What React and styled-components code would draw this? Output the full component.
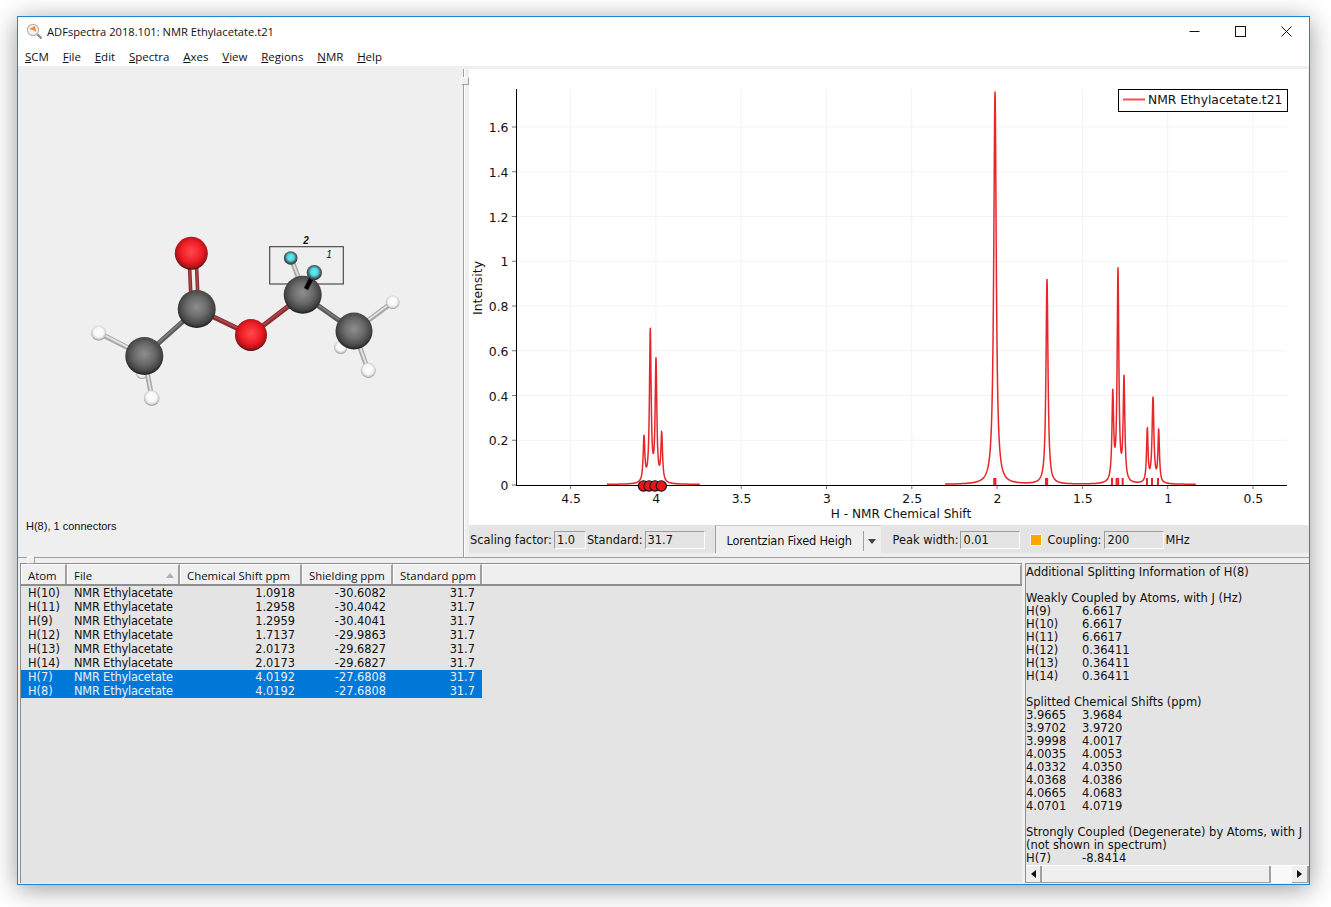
import React from 'react';
import styled, { createGlobalStyle } from 'styled-components';

const GlobalStyle = createGlobalStyle`
  html, body { margin: 0; padding: 0; background: #fff; }
  body { font-family: "DejaVu Sans", sans-serif; font-size: 11px; color: #111; }
`;

const Desktop = styled.div`
  box-sizing: border-box;
  width: 1331px;
  height: 907px;
  padding: 16px 0 0 17px;
  overflow: hidden;
`;

const Window = styled.div`
  box-sizing: border-box;
  width: 1293px;
  height: 869px;
  border: 1px solid #1a86d8;
  background: #efefef;
  box-shadow: 0 4px 24px rgba(0, 0, 0, 0.4);
  display: flex;
  flex-direction: column;
`;

const TitleBar = styled.div`
  height: 29px;
  background: #fff;
  display: flex;
  align-items: center;
  padding-left: 8px;
  font-family: "Open Sans", sans-serif;
  font-size: 11.15px;
  color: #111;
`;
const TitleText = styled.span`
  margin-left: 4px;
  flex: 1;
`;
const WinButton = styled.div`
  width: 46px;
  height: 29px;
  display: flex;
  align-items: center;
  justify-content: center;
`;

const MenuBar = styled.div`
  height: 20px;
  background: #fff;
  display: flex;
  align-items: center;
  gap: 13.8px;
  padding-left: 7px;
  font-family: "Open Sans", sans-serif;
  font-size: 11.5px;
  color: #111;
`;
const MenuItem = styled.span`
  white-space: nowrap;
  u { text-underline-offset: 1px; }
`;

const TopPane = styled.div`
  height: 491px;
  display: flex;
`;
const LeftPane = styled.div`
  width: 444px;
  display: flex;
  flex-direction: column;
`;
const Status = styled.div`
  font-family: "Liberation Sans", sans-serif;
  font-size: 11px;
  line-height: 20px;
  padding-left: 8px;
`;
const VSplit = styled.div`
  position: relative;
  width: 7px;
  margin-top: 3px;
  &::before {
    content: "";
    position: absolute;
    left: 1px;
    top: 0;
    bottom: 0;
    width: 1px;
    background: #a0a0a0;
    box-shadow: 1px 0 0 #fff;
  }
`;
const SplitHandle = styled.div`
  position: absolute;
  box-sizing: border-box;
  width: 8px;
  height: 8px;
  background: #efefef;
  border: 1px solid #a0a0a0;
  border-top-color: #fff;
  border-left-color: #fff;
  left: ${p => p.$left}px;
  top: ${p => p.$top}px;
`;
const RightPane = styled.div`
  flex: 1;
  display: flex;
  flex-direction: column;
  padding-top: 3px;
`;
const PlotSvg = styled.svg`
  display: block;
  width: 839px;
  height: 456px;
  background: #fff;
`;
const Controls = styled.div`
  height: 28px;
  background: #e4e4e4;
  display: flex;
  align-items: center;
  padding: 2px 0 0 1px;
  box-sizing: border-box;
  font-size: 11.4px;
  white-space: nowrap;
`;
const Field = styled.div`
  box-sizing: border-box;
  width: ${p => p.$w}px;
  height: 18px;
  margin: -1px ${p => p.$mr || 2}px 0 ${p => p.$ml || 2}px;
  padding-left: 2px;
  line-height: 16px;
  border: 1px solid #fff;
  border-top-color: #9c9c9c;
  border-left-color: #9c9c9c;
`;
const Combo = styled.div`
  box-sizing: border-box;
  flex: none;
  width: 166px;
  height: 28px;
  margin: -2px 12px 0 8px;
  padding-top: 2px;
  background: #efefef;
  border-left: 1px solid #a0a0a0;
  border-top: 1px solid #c8c8c8;
  display: flex;
  align-items: center;
`;
const ComboText = styled.span`
  flex: none;
  width: 136px;
  margin-left: 11px;
  letter-spacing: -0.2px;
`;
const ComboArrow = styled.span`
  flex: none;
  height: 20px;
  width: 17px;
  border-left: 1px solid #a0a0a0;
  position: relative;
  &::after {
    content: "";
    position: absolute;
    left: 4px;
    top: 8px;
    border: 4px solid transparent;
    border-top: 5px solid #444;
    border-bottom: 0;
  }
`;
const OrangeCheck = styled.span`
  box-sizing: border-box;
  width: 10px;
  height: 10px;
  margin: -1px 6px 0 9px;
  background: #ffa500;
  box-shadow: 0 0 0 1px #f6f6f6;
`;

const HSplit = styled.div`
  position: relative;
  height: 6px;
  border-top: 1px solid #a0a0a0;
  box-sizing: border-box;
`;

const BottomPane = styled.div`
  height: 320px;
  display: flex;
  gap: 3px;
  padding-left: 2px;
`;
const TablePanel = styled.div`
  box-sizing: border-box;
  width: 1002px;
  background: #e4e4e4;
  border-left: 1px solid #8e8e8e;
  border-top: 1px solid #8e8e8e;
`;
const HeaderRow = styled.div`
  display: flex;
  height: 22px;
  background: #efefef;
  border-bottom: 2px solid #8e8e8e;
  box-sizing: border-box;
`;
const HeaderCell = styled.div`
  box-sizing: border-box;
  position: relative;
  width: ${p => p.$w}px;
  flex: ${p => (p.$fill ? 1 : 'none')};
  padding-left: 6px;
  line-height: 21px;
  font-family: "Open Sans", sans-serif;
  font-size: 11.4px;
  border-right: 2px solid #a0a0a0;
  border-left: 1px solid #fff;
  border-top: 1px solid #fff;
  white-space: nowrap;
`;
const SortArrow = styled.span`
  position: absolute;
  right: 4px;
  top: 8px;
  border: 4px solid transparent;
  border-bottom: 5px solid #b0b0b0;
  border-top: 0;
`;
const Row = styled.div`
  width: 461px;
  height: 14px;
  display: grid;
  grid-template-columns: 46px 113px 122px 91px 89px;
  line-height: 14px;
  font-size: 11.4px;
  background: ${p => (p.$selected ? '#0078d7' : 'transparent')};
  color: ${p => (p.$selected ? '#e8f0f8' : '#111')};
`;
const Cell = styled.div`
  padding: 0 7px;
  text-align: ${p => (p.$right ? 'right' : 'left')};
  white-space: nowrap;
`;
const FileCell = styled(Cell)`
  letter-spacing: -0.19px;
`;

const DetailPanel = styled.div`
  box-sizing: border-box;
  flex: 1;
  min-width: 0;
  background: #e4e4e4;
  border-left: 1px solid #8e8e8e;
  border-top: 1px solid #8e8e8e;
  display: flex;
  flex-direction: column;
`;
const DetailText = styled.div`
  flex: 1;
  padding-top: 2px;
  font-size: 11.5px;
  line-height: 13px;
  white-space: nowrap;
`;
const DetailLine = styled.div`
  height: 13px;
  display: flex;
`;
const DetailKey = styled.span`
  width: 56px;
`;
const ScrollBar = styled.div`
  height: 18px;
  display: flex;
  border-top: 1px solid #fff;
  box-sizing: border-box;
  background: repeating-conic-gradient(#f4f4f4 0 25%, #fff 0 50%) 0 0 / 2px 2px;
`;
const ScrollButton = styled.div`
  box-sizing: border-box;
  width: ${p => p.$w}px;
  background: #efefef;
  border-right: 2px solid #a0a0a0;
  border-bottom: 1px solid #a0a0a0;
  display: flex;
  align-items: center;
  justify-content: center;
  &::after {
    content: "";
    border: 4px solid transparent;
    ${p => (p.$dir === 'left' ? 'border-right: 5px solid #111; border-left: 0;' : 'border-left: 5px solid #111; border-right: 0;')}
  }
`;
const ScrollThumb = styled.div`
  box-sizing: border-box;
  width: 229px;
  background: #efefef;
  border-right: 2px solid #a0a0a0;
  border-bottom: 1px solid #a0a0a0;
`;
const ScrollTrack = styled.div`
  flex: 1;
`;

const MENU = ['SCM', 'File', 'Edit', 'Spectra', 'Axes', 'View', 'Regions', 'NMR', 'Help'];

const ROWS = [
  ['H(10)', '1.0918', '-30.6082'],
  ['H(11)', '1.2958', '-30.4042'],
  ['H(9)', '1.2959', '-30.4041'],
  ['H(12)', '1.7137', '-29.9863'],
  ['H(13)', '2.0173', '-29.6827'],
  ['H(14)', '2.0173', '-29.6827'],
  ['H(7)', '4.0192', '-27.6808', true],
  ['H(8)', '4.0192', '-27.6808', true],
];

const DETAIL = [
  ['Additional Splitting Information of H(8)'],
  [''],
  ['Weakly Coupled by Atoms, with J (Hz)'],
  ['H(9)', '6.6617'],
  ['H(10)', '6.6617'],
  ['H(11)', '6.6617'],
  ['H(12)', '0.36411'],
  ['H(13)', '0.36411'],
  ['H(14)', '0.36411'],
  [''],
  ['Splitted Chemical Shifts (ppm)'],
  ['3.9665', '3.9684'],
  ['3.9702', '3.9720'],
  ['3.9998', '4.0017'],
  ['4.0035', '4.0053'],
  ['4.0332', '4.0350'],
  ['4.0368', '4.0386'],
  ['4.0665', '4.0683'],
  ['4.0701', '4.0719'],
  [''],
  ['Strongly Coupled (Degenerate) by Atoms, with J'],
  ['(not shown in spectrum)'],
  ['H(7)', '-8.8414'],
];

// page pixels: peak x, height above the axis, half width
const PEAKS = [
  [644, 45, 1], [650.3, 152, 1], [656, 121, 1], [661.7, 48, 1],
  [995, 393, 1.5], [1047, 205, 1.2],
  [1112.8, 87, 1], [1118, 211, 1], [1124, 103, 1],
  [1147.3, 53, 0.9], [1153, 85, 1.1], [1158.7, 52, 0.9],
];
const STICKS = [994.2, 995.4, 1046, 1047.2, 1112, 1116.6, 1118.2, 1122.7, 1147, 1152, 1158];
const XTICKS = ['4.5', '4', '3.5', '3', '2.5', '2', '1.5', '1', '0.5'];
const YTICKS = ['0', '0.2', '0.4', '0.6', '0.8', '1', '1.2', '1.4', '1.6'];

const xOf = i => 570.6 + i * 85.3;
const yOf = i => 485 - i * 44.75;

function spectrumPath(from, to) {
  let d = '';
  for (let x = from; x <= to; x += 0.2) {
    let v = 0;
    PEAKS.forEach(([x0, h, g]) => {
      v += (h * g * g) / ((x - x0) * (x - x0) + g * g);
    });
    d += `${d ? 'L' : 'M'}${x.toFixed(1)} ${(484.5 - v).toFixed(1)}`;
  }
  return d;
}

function Spectrum() {
  return (
    <PlotSvg viewBox="469 69 839 456">
      {XTICKS.map((t, i) => (
        <line key={t} x1={xOf(i)} x2={xOf(i)} y1="89" y2="485" stroke="#f3f3f3" />
      ))}
      {YTICKS.map((t, i) => (
        <line key={t} x1="516" x2="1287" y1={yOf(i)} y2={yOf(i)} stroke="#f3f3f3" />
      ))}
      <path d={spectrumPath(607, 700)} fill="none" stroke="#e8262a" strokeWidth="1.5" />
      <path d={spectrumPath(945, 1196)} fill="none" stroke="#e8262a" strokeWidth="1.5" />
      {STICKS.map(x => (
        <line key={x} x1={x} x2={x} y1="478" y2="485" stroke="#e8262a" strokeWidth="2" />
      ))}
      <line x1="516.5" x2="516.5" y1="89" y2="486" stroke="#000" />
      <line x1="516" x2="1287" y1="485.5" y2="485.5" stroke="#000" />
      {XTICKS.map((t, i) => (
        <g key={t}>
          <line x1={xOf(i)} x2={xOf(i)} y1="486" y2="489" stroke="#777" />
          <text x={xOf(i) + 0.4} y="503" textAnchor="middle" fontSize="12.4" fontFamily="DejaVu Sans" fill="#111">{t}</text>
        </g>
      ))}
      {YTICKS.map((t, i) => (
        <g key={t}>
          <line x1="512" x2="516" y1={yOf(i)} y2={yOf(i)} stroke="#777" />
          <text x="508.5" y={yOf(i) + 5} textAnchor="end" fontSize="12.4" fontFamily="DejaVu Sans" fill="#111">{t}</text>
        </g>
      ))}
      <text x="901" y="518" textAnchor="middle" fontSize="12.1" fontFamily="DejaVu Sans" fill="#111">H - NMR Chemical Shift</text>
      <text transform="translate(482 288) rotate(-90)" textAnchor="middle" fontSize="12.4" fontFamily="DejaVu Sans" fill="#111">Intensity</text>
      {[643.5, 649, 655, 661.3].map(x => (
        <circle key={x} cx={x} cy="486" r="5.2" fill="#e8171c" stroke="#111" strokeWidth="1.1" />
      ))}
      <rect x="1118.5" y="89.5" width="169" height="22" fill="#fff" stroke="#000" />
      <line x1="1123" x2="1145" y1="99.5" y2="99.5" stroke="#ee5055" strokeWidth="2" />
      <text x="1148" y="104" fontSize="12.3" fontFamily="DejaVu Sans" fill="#111">NMR Ethylacetate.t21</text>
    </PlotSvg>
  );
}

function Bond({ x1, y1, x2, y2, color, light, w = 5 }) {
  return (
    <g>
      <line x1={x1} y1={y1} x2={x2} y2={y2} stroke={color} strokeWidth={w} />
      <line x1={x1} y1={y1 - 0.6} x2={x2} y2={y2 - 0.6} stroke={light} strokeWidth={w * 0.35} />
    </g>
  );
}

function Atom({ x, y, r, kind }) {
  return <circle cx={x} cy={y} r={r} fill={`url(#${kind})`} />;
}

function Sphere({ id, stops }) {
  return (
    <radialGradient id={id} cx="0.5" cy="0.45" r="0.55">
      {stops.map(([o, c]) => <stop key={o} offset={o} stopColor={c} />)}
    </radialGradient>
  );
}

function Molecule() {
  return (
    <svg viewBox="18 66 444 450" width="444" height="450" style={{ display: 'block' }}>
      <defs>
        <Sphere id="carbon" stops={[[0, '#8e8e8e'], [0.5, '#6a6a6a'], [0.85, '#424242'], [1, '#1c1c1c']]} />
        <Sphere id="oxygen" stops={[[0, '#ff4a4f'], [0.6, '#ee1c24'], [0.88, '#a81418'], [1, '#3a0c0c']]} />
        <Sphere id="hydrogen" stops={[[0, '#ffffff'], [0.6, '#f6f6f6'], [0.86, '#c8c8c8'], [1, '#808080']]} />
        <Sphere id="selected" stops={[[0, '#62f0f4'], [0.45, '#4fd8e0'], [0.7, '#4a7078'], [1, '#2a2a2a']]} />
      </defs>
      <Atom x={340.7} y={347.3} r={6.5} kind="hydrogen" />
      <Atom x={142} y={373} r={6} kind="hydrogen" />
      <Bond x1={144} y1={356} x2={99} y2={333} color="#a8a8a8" light="#e6e6e6" />
      <Bond x1={144} y1={356} x2={152} y2={398} color="#a8a8a8" light="#e6e6e6" />
      <Bond x1={354} y1={331} x2={393} y2={302} color="#a8a8a8" light="#e6e6e6" />
      <Bond x1={354} y1={331} x2={368} y2={370} color="#a8a8a8" light="#e6e6e6" />
      <Bond x1={144} y1={356} x2={197} y2={309} color="#5a5a5a" light="#808080" />
      <Bond x1={303} y1={295} x2={354} y2={331} color="#5a5a5a" light="#808080" />
      <Bond x1={197} y1={309} x2={251} y2={335} color="#8a2c2e" light="#a84a4c" />
      <Bond x1={251} y1={335} x2={303} y2={295} color="#8a2c2e" light="#a84a4c" />
      <Bond x1={189} y1={253} x2={191} y2={300} color="#8a2c2e" light="#a84a4c" w={3.6} />
      <Bond x1={196} y1={253} x2={198} y2={300} color="#8a2c2e" light="#a84a4c" w={3.6} />
      <Bond x1={291} y1={258} x2={303} y2={290} color="#a8a8a8" light="#dcdcdc" />
      <Atom x={98.7} y={333} r={7.5} kind="hydrogen" />
      <Atom x={151.7} y={398} r={7.8} kind="hydrogen" />
      <Atom x={392.7} y={302.3} r={6.8} kind="hydrogen" />
      <Atom x={368.3} y={370.3} r={7.5} kind="hydrogen" />
      <Atom x={191.3} y={253.3} r={16.5} kind="oxygen" />
      <Atom x={144.3} y={356} r={19} kind="carbon" />
      <Atom x={196.7} y={309} r={19} kind="carbon" />
      <Atom x={251} y={335} r={16} kind="oxygen" />
      <Atom x={354} y={331} r={18.5} kind="carbon" />
      <rect x="269.7" y="246.7" width="73.6" height="37.3" fill="none" stroke="#3e3e3e" strokeWidth="1.1" />
      <Atom x={302.7} y={294.7} r={19} kind="carbon" />
      <line x1="306" y1="289" x2="314" y2="273" stroke="#000" strokeWidth="4.5" />
      <Atom x={290.7} y={258} r={6.8} kind="selected" />
      <Atom x={314.3} y={272.7} r={7.6} kind="selected" />
      <text x="306" y="244" textAnchor="middle" fontSize="10" fontWeight="700" fontStyle="italic" fontFamily="Liberation Sans" fill="#111">2</text>
      <text x="329" y="258" textAnchor="middle" fontSize="10" fontStyle="italic" fontFamily="Liberation Sans" fill="#111">1</text>
    </svg>
  );
}

function AppIcon() {
  return (
    <svg width="17" height="17" viewBox="0 0 17 17">
      <line x1="10.5" y1="10.5" x2="15.5" y2="15.5" stroke="#8a8a8a" strokeWidth="2.2" />
      <circle cx="7" cy="7" r="5.6" fill="#f4f0ec" stroke="#b8b8b8" strokeWidth="1.2" />
      <path d="M3 6 L9 3 L10 9 L7 7 Z" fill="#f08a3c" />
    </svg>
  );
}

export default function App() {
  return (
    <Desktop>
      <GlobalStyle />
      <Window>
        <TitleBar>
          <AppIcon />
          <TitleText>ADFspectra 2018.101: NMR Ethylacetate.t21</TitleText>
          <WinButton>
            <svg width="11" height="11" viewBox="0 0 11 11"><line x1="0.5" x2="10.5" y1="5.5" y2="5.5" stroke="#111" /></svg>
          </WinButton>
          <WinButton>
            <svg width="11" height="11" viewBox="0 0 11 11"><rect x="0.5" y="0.5" width="10" height="10" fill="none" stroke="#111" /></svg>
          </WinButton>
          <WinButton>
            <svg width="11" height="11" viewBox="0 0 11 11"><path d="M0.5 0.5 L10.5 10.5 M10.5 0.5 L0.5 10.5" stroke="#111" fill="none" /></svg>
          </WinButton>
        </TitleBar>
        <MenuBar>
          {MENU.map(m => (
            <MenuItem key={m}><u>{m[0]}</u>{m.slice(1)}</MenuItem>
          ))}
        </MenuBar>
        <TopPane>
          <LeftPane>
            <Molecule />
            <Status>H(8), 1 connectors</Status>
          </LeftPane>
          <VSplit>
            <SplitHandle $left={-1} $top={8} />
          </VSplit>
          <RightPane>
            <Spectrum />
            <Controls>
              Scaling factor:<Field $w={32} $mr={1}>1.0</Field>
              Standard:<Field $w={60}>31.7</Field>
              <Combo>
                <ComboText>Lorentzian Fixed Heigh</ComboText>
                <ComboArrow />
              </Combo>
              Peak width:<Field $w={60}>0.01</Field>
              <OrangeCheck />
              Coupling:<Field $w={60} $ml={3} $mr={1}>200</Field>
              MHz
            </Controls>
          </RightPane>
        </TopPane>
        <HSplit>
          <SplitHandle $left={9} $top={-2} />
        </HSplit>
        <BottomPane>
          <TablePanel>
            <HeaderRow>
              <HeaderCell $w={46}>Atom</HeaderCell>
              <HeaderCell $w={113}>File<SortArrow /></HeaderCell>
              <HeaderCell $w={122}>Chemical Shift ppm</HeaderCell>
              <HeaderCell $w={91}>Shielding ppm</HeaderCell>
              <HeaderCell $w={89}>Standard ppm</HeaderCell>
              <HeaderCell $fill />
            </HeaderRow>
            {ROWS.map(([atom, shift, shield, selected]) => (
              <Row key={atom} $selected={selected}>
                <Cell>{atom}</Cell>
                <FileCell>NMR Ethylacetate</FileCell>
                <Cell $right>{shift}</Cell>
                <Cell $right>{shield}</Cell>
                <Cell $right>31.7</Cell>
              </Row>
            ))}
          </TablePanel>
          <DetailPanel>
            <DetailText>
              {DETAIL.map(([a, b], i) => (
                <DetailLine key={i}>
                  {b ? <DetailKey>{a}</DetailKey> : a}
                  {b}
                </DetailLine>
              ))}
            </DetailText>
            <ScrollBar>
              <ScrollButton $w={16} $dir="left" />
              <ScrollThumb />
              <ScrollTrack />
              <ScrollButton $w={17} $dir="right" />
            </ScrollBar>
          </DetailPanel>
        </BottomPane>
      </Window>
    </Desktop>
  );
}
